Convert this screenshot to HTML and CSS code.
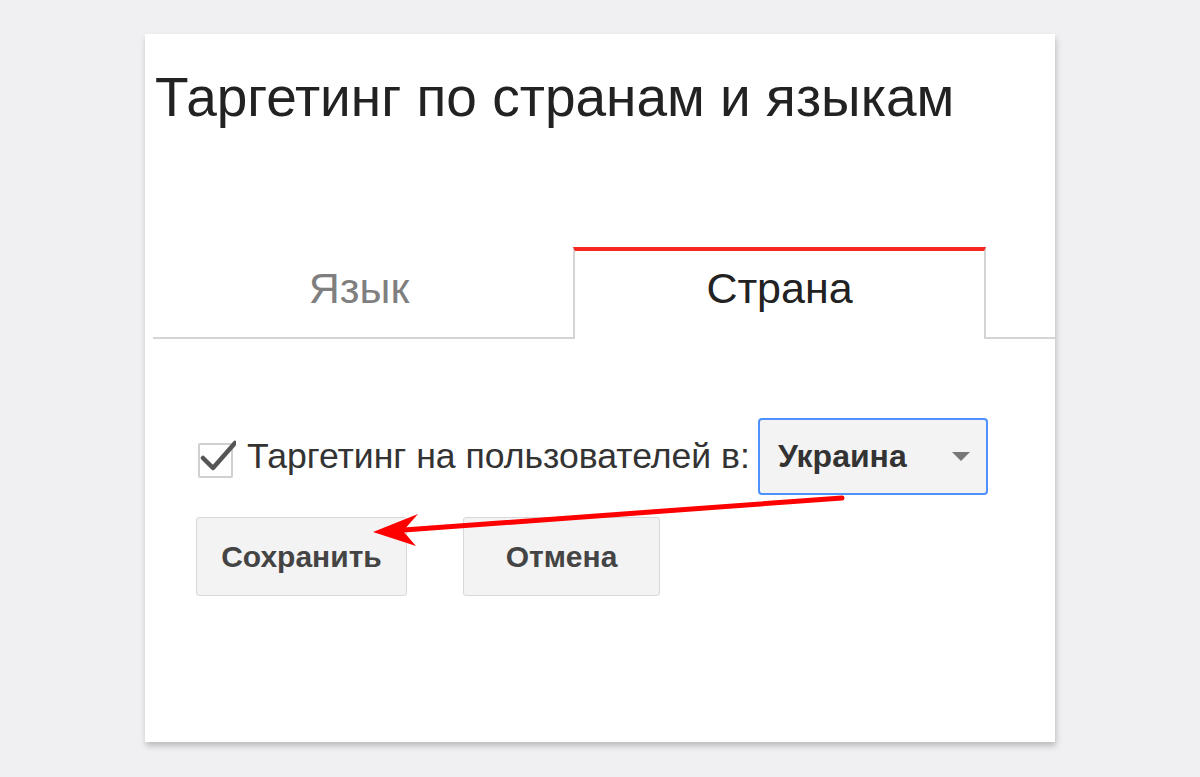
FILE: index.html
```html
<!DOCTYPE html>
<html lang="ru">
<head>
  <meta charset="UTF-8">
  <title>Таргетинг по странам и языкам</title>
  <link rel="stylesheet" href="styles.css">
</head>
<body>
  <div class="page">
    <div class="card">
      <h1 class="title">Таргетинг по странам и языкам</h1>

      <div class="tabs">
        <div class="tab">Язык</div>
        <div class="tab active">Страна</div>
      </div>

      <div class="target-row">
        <span class="checkbox">
          <svg width="40" height="40" viewBox="0 0 40 40">
            <path d="M7 21 L17 31 L39 6" fill="none" stroke="#555" stroke-width="4.5" stroke-linecap="round" stroke-linejoin="round"/>
          </svg>
        </span>
        <span class="target-label">Таргетинг на пользователей в:</span>
        <div class="select">
          <span>Украина</span>
          <span class="caret"></span>
        </div>
      </div>

      <div class="actions">
        <button class="btn">Сохранить</button>
        <button class="btn">Отмена</button>
      </div>

      <!-- стрелка-указатель поверх формы -->
      <svg class="pointer" width="910" height="708" viewBox="0 0 910 708">
        <line x1="697" y1="464" x2="245" y2="497" stroke="#f00" stroke-width="5" stroke-linecap="round"/>
        <polygon points="228,498 273,480 258,497 271,512" fill="#f00"/>
      </svg>
    </div>
  </div>
</body>
</html>
```

FILE: styles.css
```css
body {
  margin: 0;
  background-color: #f0f0f2;
  font-family: "Liberation Sans", Arial, sans-serif;
}
.page {
  min-height: 777px;
  padding: 34px 0 0 145px;
  box-sizing: border-box;
}
.card {
  position: relative;
  width: 910px;
  height: 708px;
  background-color: #fff;
  box-shadow: 1px 4px 6px rgba(0,0,0,0.22);
}
.title {
  margin: 0;
  padding: 36px 0 0 10px;
  font-size: 55px;
  font-weight: normal;
  line-height: 1;
  color: #222;
}
.tabs {
  display: flex;
  margin: 122px 0 0 8px;
  border-bottom: 2px solid #d4d4d4;
  height: 90px;
}
.tab {
  box-sizing: border-box;
  width: 420px;
  padding-top: 20px;
  padding-right: 8px;
  text-align: center;
  font-size: 43px;
  line-height: 1;
  color: #7f7f7f;
}
.tab.active {
  width: 413px;
  height: 92px;
  padding-top: 16px;
  padding-right: 0;
  background-color: #fff;
  border-top: 4px solid #f4261f;
  border-left: 2px solid #d4d4d4;
  border-right: 2px solid #d4d4d4;
  color: #222;
}
.target-row {
  display: flex;
  align-items: center;
  margin: 79px 0 0 53px;
}
.checkbox {
  position: relative;
  box-sizing: border-box;
  width: 35px;
  height: 35px;
  margin-top: 8px;
  border: 2px solid #d0d0d0;
  border-radius: 2px;
}
.checkbox svg {
  position: absolute;
  left: -4px;
  top: -8px;
}
.target-label {
  margin-left: 14px;
  font-size: 35.6px;
  color: #333;
}
.select {
  box-sizing: border-box;
  display: flex;
  align-items: center;
  justify-content: space-between;
  width: 230px;
  height: 77px;
  margin-left: 8px;
  padding: 0 16px 0 18px;
  background-color: #f3f3f3;
  border: 2px solid #4d90fe;
  border-radius: 4px;
  font-size: 32px;
  font-weight: bold;
  color: #333;
}
.caret {
  width: 0;
  height: 0;
  border-left: 9px solid transparent;
  border-right: 9px solid transparent;
  border-top: 9px solid #777;
}
.actions {
  display: flex;
  gap: 56px;
  margin: 22px 0 0 51px;
}
.btn {
  box-sizing: border-box;
  height: 79px;
  padding: 0 20px;
  background-color: #f3f3f3;
  border: 1px solid #d8d8d8;
  border-radius: 3px;
  font-family: "Liberation Sans", Arial, sans-serif;
  font-size: 30px;
  font-weight: bold;
  color: #444;
}
.btn:first-child {
  width: 211px;
}
.btn:last-child {
  width: 197px;
}
.pointer {
  position: absolute;
  left: 0;
  top: 0;
}
```
